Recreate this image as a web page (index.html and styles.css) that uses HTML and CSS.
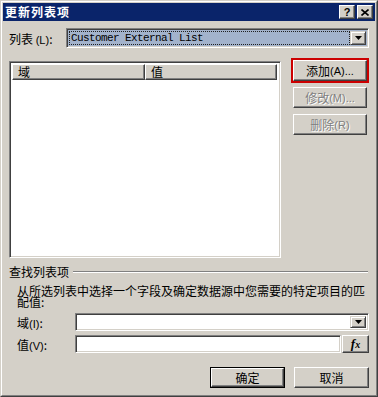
FILE: index.html
```html
<!DOCTYPE html>
<html>
<head>
<meta charset="utf-8">
<link rel="stylesheet" href="styles.css">
</head>
<body>
<div class="window">
  <div class="frame">
    <div class="titlebar">
      <span class="title">更新列表项</span>
      <div class="caption-btns">
        <div class="cap-btn"><span class="q">?</span></div>
        <div class="cap-btn"><svg width="8" height="7" viewBox="0 0 8 7"><path d="M0.5 0.5 L7.5 6.5 M7.5 0.5 L0.5 6.5" stroke="#000" stroke-width="1.6" fill="none"/></svg></div>
      </div>
    </div>
    <div class="content">
      <div class="row-list">
        <span class="lbl">列表 <span class="ascii">(L)</span>:</span>
        <div class="combo combo-main">
          <div class="combo-value"><span class="focus">Customer External List</span></div>
          <div class="drop-btn"><svg width="7" height="4" viewBox="0 0 7 4"><path d="M0 0 H7 L3.5 4 Z" fill="#000"/></svg></div>
        </div>
      </div>
      <div class="main">
        <div class="listview">
          <div class="lv-header">
            <div class="lv-col col-a">域</div>
            <div class="lv-col col-b">值</div>
          </div>
        </div>
        <div class="side-btns">
          <div class="highlight"><div class="btn">添加<span class="ascii">(A)...</span></div></div>
          <div class="btn disabled b2">修改<span class="ascii">(M)...</span></div>
          <div class="btn disabled b3">删除<span class="ascii">(R)</span></div>
        </div>
      </div>
      <div class="group-head">
        <span class="group-title">查找列表项</span>
        <div class="etched"></div>
      </div>
      <div class="desc">从所选列表中选择一个字段及确定数据源中您需要的特定项目的匹配值:</div>
      <div class="field-row fr1">
        <span class="flbl">域<span class="ascii">(I)</span>:</span>
        <div class="combo combo-field">
          <div class="combo-value white"></div>
          <div class="drop-btn small"><svg width="7" height="4" viewBox="0 0 7 4"><path d="M0 0 H7 L3.5 4 Z" fill="#000"/></svg></div>
        </div>
      </div>
      <div class="field-row fr2">
        <span class="flbl">值<span class="ascii">(V)</span>:</span>
        <div class="edit"></div>
        <div class="btn fx"><span class="f">f</span><span class="x">x</span></div>
      </div>
      <div class="dlg-btns">
        <div class="btn default"><div class="btn-in">确定</div></div>
        <div class="btn">取消</div>
      </div>
    </div>
  </div>
</div>
</body>
</html>
```
FILE: styles.css
```css
html, body {
  margin: 0;
  padding: 0;
  background: #d4d0c8;
}
body {
  font-family: "Noto Sans CJK SC", "Liberation Sans", sans-serif;
  font-size: 12px;
  color: #000;
}
.window {
  width: 378px;
  height: 397px;
  box-sizing: border-box;
  border: 1px solid;
  border-color: #d4d0c8 #404040 #404040 #d4d0c8;
  background: #d4d0c8;
}
.frame {
  height: 100%;
  box-sizing: border-box;
  border: 1px solid;
  border-color: #fff #808080 #808080 #fff;
  padding: 1px;
}
.titlebar {
  height: 18px;
  background: #0a246a;
  display: flex;
  align-items: center;
  justify-content: space-between;
}
.title {
  color: #fff;
  font-weight: bold;
  font-size: 12px;
  letter-spacing: 1px;
  padding-left: 2px;
  line-height: 18px;
}
.caption-btns {
  display: flex;
  gap: 2px;
  padding-right: 2px;
}
.cap-btn {
  width: 16px;
  height: 14px;
  box-sizing: border-box;
  background: #d4d0c8;
  border: 1px solid;
  border-color: #fff #404040 #404040 #fff;
  box-shadow: inset -1px -1px #808080;
  display: flex;
  align-items: center;
  justify-content: center;
}
.q {
  font-family: "Liberation Sans", sans-serif;
  font-weight: bold;
  font-size: 11px;
  line-height: 11px;
}
.ascii {
  font-family: "Liberation Sans", sans-serif;
  font-size: 11px;
}
.content {
  padding: 7px 6px 0 6px;
}
.row-list {
  display: flex;
  height: 20px;
  align-items: center;
}
.lbl {
  width: 57px;
  flex: none;
  white-space: nowrap;
}
.combo {
  box-sizing: border-box;
  border: 1px solid;
  border-color: #808080 #fff #fff #808080;
  box-shadow: inset 1px 1px #404040, inset -1px -1px #d4d0c8;
  padding: 2px;
  display: flex;
  align-items: stretch;
}
.combo-main {
  width: 303px;
  height: 20px;
  background: #a3b3cc;
}
.combo-value {
  flex: 1;
  display: flex;
  align-items: stretch;
}
.combo-value.white {
  background: #fff;
}
.combo-field {
  background: #fff;
}
.focus {
  flex: 1;
  border: 1px dotted #202020;
  font-family: "Liberation Mono", monospace;
  font-size: 11px;
  letter-spacing: -0.6px;
  line-height: 12px;
  padding-left: 1px;
}
.drop-btn {
  width: 16px;
  flex: none;
  box-sizing: border-box;
  background: #d4d0c8;
  border: 1px solid;
  border-color: #d4d0c8 #404040 #404040 #d4d0c8;
  box-shadow: inset 1px 1px #fff, inset -1px -1px #808080;
  display: flex;
  align-items: center;
  justify-content: center;
}
.main {
  display: flex;
  margin-top: 10px;
}
.listview {
  margin-top: 3px;
  width: 272px;
  height: 197px;
  box-sizing: border-box;
  border: 1px solid;
  border-color: #808080 #fff #fff #808080;
  box-shadow: inset 1px 1px #404040, inset -1px -1px #d4d0c8;
  padding: 2px 3px 2px 2px;
  background: #fff;
}
.lv-header {
  display: flex;
  height: 16px;
}
.lv-col {
  box-sizing: border-box;
  height: 16px;
  background: #d4d0c8;
  border: 1px solid;
  border-color: #fff #404040 #404040 #fff;
  box-shadow: inset -1px -1px #808080;
  line-height: 13px;
  padding-left: 5px;
}
.col-a {
  width: 133px;
}
.col-b {
  flex: 1;
}
.side-btns {
  margin-left: 10px;
  width: 78px;
  display: flex;
  flex-direction: column;
}
.highlight {
  border: 2px solid #cc0000;
  width: 78px;
  height: 25px;
  box-sizing: border-box;
}
.btn {
  box-sizing: border-box;
  width: 74px;
  height: 21px;
  background: #d4d0c8;
  border: 1px solid;
  border-color: #fff #404040 #404040 #fff;
  box-shadow: inset -1px -1px #808080;
  display: flex;
  align-items: center;
  justify-content: center;
  white-space: nowrap;
}
.side-btns .btn.disabled {
  margin-left: 2px;
}
.b2 {
  margin-top: 4px;
}
.b3 {
  margin-top: 6px;
}
.disabled {
  color: #808080;
  text-shadow: 1px 1px #fff;
}
.group-head {
  display: flex;
  align-items: center;
  margin-top: 8px;
  height: 12px;
}
.group-title {
  line-height: 12px;
  white-space: nowrap;
}
.etched {
  flex: 1;
  margin-left: 4px;
  margin-right: 1px;
  height: 0;
  border-top: 1px solid #808080;
  border-bottom: 1px solid #fff;
}
.desc {
  margin-top: 7px;
  padding-left: 8px;
  line-height: 11px;
}
.field-row {
  display: flex;
  align-items: center;
  height: 18px;
  padding-left: 8px;
}
.fr1 {
  margin-top: 6px;
}
.fr2 {
  margin-top: 4px;
}
.flbl {
  width: 58px;
  flex: none;
  white-space: nowrap;
}
.combo-field {
  width: 294px;
  height: 18px;
  padding: 2px 2px 2px 2px;
}
.drop-btn.small {
  width: 16px;
}
.edit {
  width: 266px;
  height: 18px;
  box-sizing: border-box;
  border: 1px solid;
  border-color: #808080 #fff #fff #808080;
  box-shadow: inset 1px 1px #404040, inset -1px -1px #d4d0c8;
  background: #fff;
}
.btn.fx {
  width: 27px;
  height: 18px;
  margin-left: 1px;
  font-family: "Liberation Serif", serif;
  font-style: italic;
  font-weight: bold;
}
.fx .f {
  font-size: 13px;
}
.fx .x {
  font-size: 10px;
}
.dlg-btns {
  display: flex;
  justify-content: flex-end;
  gap: 9px;
  margin-top: 14px;
}
.dlg-btns .btn {
  width: 75px;
  height: 21px;
}
.btn.default {
  border: 1px solid #000;
  box-shadow: none;
  padding: 0;
}
.btn-in {
  width: 100%;
  height: 100%;
  box-sizing: border-box;
  border: 1px solid;
  border-color: #fff #404040 #404040 #fff;
  box-shadow: inset -1px -1px #808080;
  display: flex;
  align-items: center;
  justify-content: center;
}
```
